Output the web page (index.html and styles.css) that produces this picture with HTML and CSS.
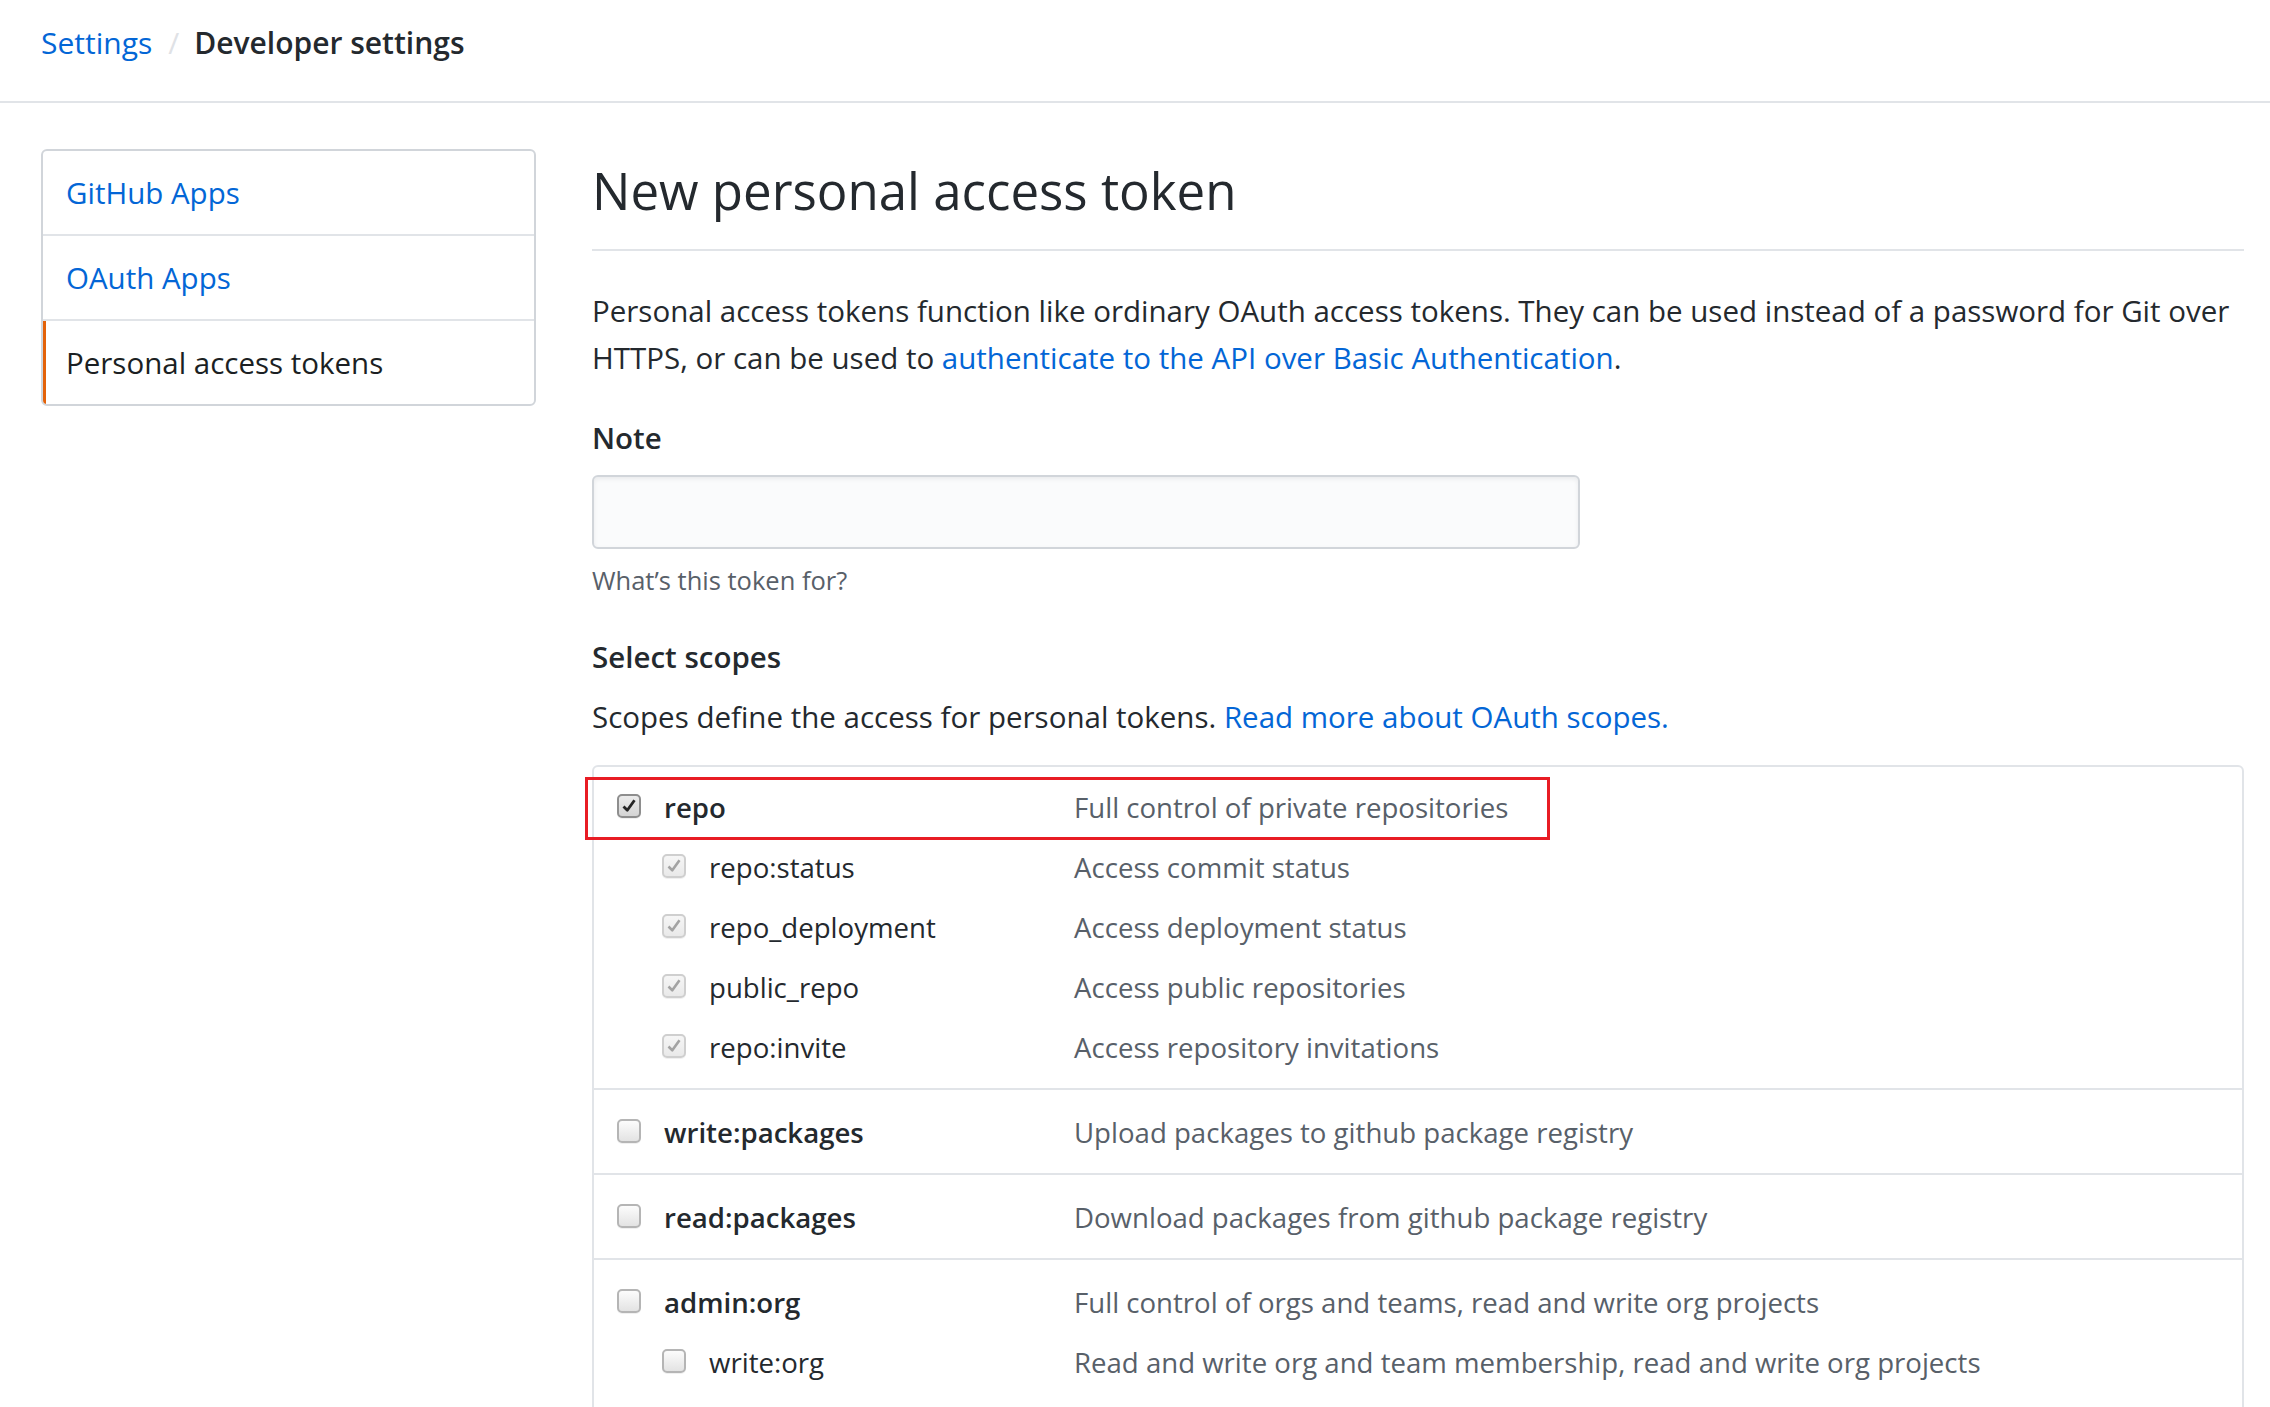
FILE: index.html
```html
<!DOCTYPE html>
<html lang="en">
<head>
<meta charset="utf-8">
<title>New personal access token</title>
<link rel="stylesheet" href="styles.css">
</head>
<body>
<header class="page-header">
  <nav class="breadcrumb">
    <a href="#">Settings</a>
    <span class="crumb-sep">/</span>
    <span class="crumb-current">Developer settings</span>
  </nav>
</header>

<div class="layout">
  <nav class="sidebar">
    <a class="menu-item" href="#">GitHub Apps</a>
    <a class="menu-item" href="#">OAuth Apps</a>
    <a class="menu-item selected" href="#">Personal access tokens</a>
  </nav>

  <main class="main">
    <div class="subhead">
      <h2 class="subhead-heading">New personal access token</h2>
    </div>
    <p class="intro">Personal access tokens function like ordinary OAuth access tokens. They can be used instead of a password for Git over HTTPS, or can be used to <a href="#">authenticate to the API over Basic Authentication</a>.</p>

    <p class="form-label">Note</p>
    <input class="note-input" type="text" aria-label="Note">
    <p class="note-hint">What’s this token for?</p>

    <p class="scopes-title">Select scopes</p>
    <p class="scopes-desc">Scopes define the access for personal tokens. <a href="#">Read more about OAuth scopes.</a></p>

    <div class="scopes">
      <div class="scope-group">
        <div class="scope-row">
          <div class="scope-label">
            <span class="cb checked"><svg viewBox="0 0 20 20" width="20" height="20"><path d="M4.5 10.5 L8.3 14.3 L15.5 4.2" fill="none" stroke="#262626" stroke-width="2.8" stroke-linejoin="round"/></svg></span>
            <span class="scope-name">repo</span>
          </div>
          <span class="scope-desc">Full control of private repositories</span>
        </div>
        <div class="scope-row sub">
          <div class="scope-label">
            <span class="cb disabled"><svg viewBox="0 0 20 20" width="20" height="20"><path d="M4.5 10.5 L8.3 14.3 L15.5 4.2" fill="none" stroke="#a3a3a3" stroke-width="2.6" stroke-linejoin="round"/></svg></span>
            <span class="scope-name">repo:status</span>
          </div>
          <span class="scope-desc">Access commit status</span>
        </div>
        <div class="scope-row sub">
          <div class="scope-label">
            <span class="cb disabled"><svg viewBox="0 0 20 20" width="20" height="20"><path d="M4.5 10.5 L8.3 14.3 L15.5 4.2" fill="none" stroke="#a3a3a3" stroke-width="2.6" stroke-linejoin="round"/></svg></span>
            <span class="scope-name">repo_deployment</span>
          </div>
          <span class="scope-desc">Access deployment status</span>
        </div>
        <div class="scope-row sub">
          <div class="scope-label">
            <span class="cb disabled"><svg viewBox="0 0 20 20" width="20" height="20"><path d="M4.5 10.5 L8.3 14.3 L15.5 4.2" fill="none" stroke="#a3a3a3" stroke-width="2.6" stroke-linejoin="round"/></svg></span>
            <span class="scope-name">public_repo</span>
          </div>
          <span class="scope-desc">Access public repositories</span>
        </div>
        <div class="scope-row sub">
          <div class="scope-label">
            <span class="cb disabled"><svg viewBox="0 0 20 20" width="20" height="20"><path d="M4.5 10.5 L8.3 14.3 L15.5 4.2" fill="none" stroke="#a3a3a3" stroke-width="2.6" stroke-linejoin="round"/></svg></span>
            <span class="scope-name">repo:invite</span>
          </div>
          <span class="scope-desc">Access repository invitations</span>
        </div>
      </div>

      <div class="scope-group">
        <div class="scope-row">
          <div class="scope-label">
            <span class="cb"></span>
            <span class="scope-name">write:packages</span>
          </div>
          <span class="scope-desc">Upload packages to github package registry</span>
        </div>
      </div>

      <div class="scope-group">
        <div class="scope-row">
          <div class="scope-label">
            <span class="cb"></span>
            <span class="scope-name">read:packages</span>
          </div>
          <span class="scope-desc">Download packages from github package registry</span>
        </div>
      </div>

      <div class="scope-group">
        <div class="scope-row">
          <div class="scope-label">
            <span class="cb"></span>
            <span class="scope-name">admin:org</span>
          </div>
          <span class="scope-desc">Full control of orgs and teams, read and write org projects</span>
        </div>
        <div class="scope-row sub">
          <div class="scope-label">
            <span class="cb"></span>
            <span class="scope-name">write:org</span>
          </div>
          <span class="scope-desc">Read and write org and team membership, read and write org projects</span>
        </div>
        <div class="scope-row sub">
          <div class="scope-label">
            <span class="cb"></span>
            <span class="scope-name">read:org</span>
          </div>
          <span class="scope-desc">Read org and team membership, read org projects</span>
        </div>
      </div>

      <div class="annotation"></div>
    </div>
  </main>
</div>
</body>
</html>
```

FILE: styles.css
```css
* { box-sizing: border-box; }

body {
  margin: 0;
  font-family: "Open Sans", "Noto Sans", sans-serif;
  font-size: 29.5px;
  line-height: 47px;
  color: #24292e;
  background: #fff;
}

a { color: #0366d6; text-decoration: none; }

p { margin: 0; }

/* header / breadcrumb */
.page-header {
  padding: 20px 41px 36px;
  border-bottom: 2px solid #e1e4e8;
  font-size: 30px;
  line-height: 45px;
}
.breadcrumb { display: flex; align-items: baseline; }
.crumb-sep { color: #dfe2e6; margin: 0 15px 0 16px; }
.crumb-current { font-weight: 600; color: #24292e; }

/* layout */
.layout {
  display: flex;
  align-items: flex-start;
  gap: 56px;
  padding: 46px 26px 0 41px;
}

/* sidebar menu */
.sidebar {
  width: 495px;
  flex: none;
  border: 2px solid #d1d5da;
  border-radius: 6px;
  overflow: hidden;
}
.menu-item {
  display: block;
  padding: 18px 23px;
  border-top: 2px solid #e1e4e8;
}
.menu-item:first-child { border-top: 0; }
.menu-item.selected {
  color: #1b1f23;
  box-shadow: inset 3px 0 0 #e36209;
}

/* main column */
.main { flex: 1; min-width: 0; }

.subhead {
  margin-top: 9px;
  padding-bottom: 27px;
  border-bottom: 2px solid #e1e4e8;
}
.subhead-heading {
  margin: 0;
  font-size: 51px;
  line-height: 64px;
  font-weight: 400;
}

.intro { margin-top: 36px; }

.form-label { margin-top: 33px; font-weight: 600; }

.note-input {
  display: block;
  margin-top: 14px;
  width: 988px;
  height: 74px;
  border: 2px solid #d1d5da;
  border-radius: 6px;
  background: #fafbfc;
  box-shadow: inset 0 2px 4px rgba(27, 31, 35, 0.075);
  font: inherit;
}

.note-hint {
  margin-top: 13px;
  font-size: 25.5px;
  line-height: 36px;
  color: #586069;
}

.scopes-title { margin-top: 35px; font-weight: 600; }
.scopes-desc { margin-top: 13px; }

/* scopes list */
.scopes {
  position: relative;
  margin-top: 25px;
  border: 2px solid #e1e4e8;
  border-radius: 6px;
  font-size: 27.6px;
}
.scope-group {
  padding: 19px 0 17px;
  border-top: 2px solid #e1e4e8;
}
.scope-group:first-child { border-top: 0; padding: 17px 0; }

.scope-row { display: flex; }
.scope-row.sub { margin-top: 13px; }

.scope-label {
  width: 480px;
  flex: none;
  display: flex;
  align-items: flex-start;
  gap: 23px;
  padding-left: 23px;
}
.scope-row.sub .scope-label { padding-left: 68px; }

.scope-name { font-weight: 600; }
.scope-row.sub .scope-name { font-weight: 400; }

.scope-desc { color: #586069; }

/* checkboxes */
.cb {
  width: 24px;
  height: 24px;
  margin-top: 10px;
  flex: none;
  display: flex;
  align-items: center;
  justify-content: center;
  border: 2px solid #b5b5b5;
  border-radius: 5px;
  background: linear-gradient(#fcfcfc, #e3e3e3);
  box-shadow: 0 1px 0 rgba(0, 0, 0, 0.06);
}
.cb.checked {
  border-color: #8e8e8e;
  background: linear-gradient(#ececec, #d4d4d4);
}
.cb.disabled {
  border-color: #cfcfcf;
  background: linear-gradient(#f6f6f6, #e9e9e9);
}

/* red highlight drawn over the repo row */
.annotation {
  position: absolute;
  left: -9px;
  top: 10px;
  width: 965px;
  height: 63px;
  border: 3px solid #e81c24;
  pointer-events: none;
}
```
